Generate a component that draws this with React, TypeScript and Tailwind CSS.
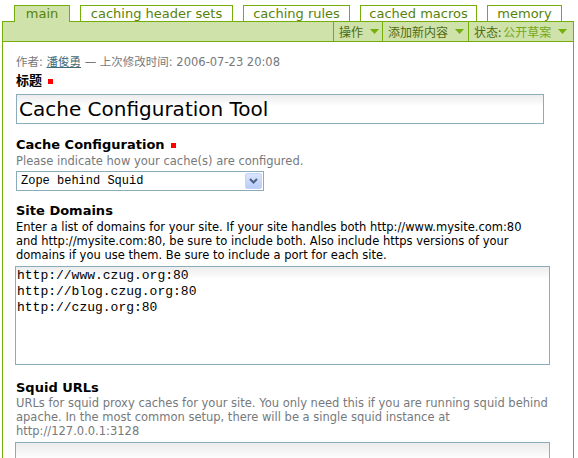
import React from "react";

const tabs = [
  { label: "main", w: "w-[56px]", active: true },
  { label: "caching header sets", w: "w-[153px]" },
  { label: "caching rules", w: "w-[107px]" },
  { label: "cached macros", w: "w-[117px]" },
  { label: "memory", w: "w-[75px]" },
];

function Arrow() {
  return (
    <svg width="9" height="5" viewBox="0 0 9 5" className="ml-[7px]">
      <path d="M0 0h9L4.5 5z" fill="#74ae0b" />
    </svg>
  );
}

function Required() {
  return <span className="inline-block w-[5px] h-[5px] bg-[#ff0000] ml-[6px] align-middle"></span>;
}

export default function App() {
  const sans = "font-['DejaVu_Sans','Noto_Sans_CJK_SC',sans-serif]";
  return (
    <div className={`w-[578px] h-[458px] bg-white overflow-hidden ${sans}`}>
      <div className="flex gap-[10px] pl-[14px] pt-[5px] h-[21px]">
        {tabs.map((t) =>
          t.active ? (
            <div
              key={t.label}
              className={`${t.w} h-[17px] relative z-10 bg-[#cee2a9] border border-b-0 border-[#74ae0b] text-[13px] leading-[15px] text-[#578308] text-center`}
            >
              {t.label}
            </div>
          ) : (
            <div
              key={t.label}
              className={`${t.w} h-[16px] bg-white border border-b-0 border-[#74ae0b] text-[13px] leading-[15px] text-[#578308] text-center`}
            >
              {t.label}
            </div>
          )
        )}
      </div>
      <div className="ml-[2px] w-[572px] h-[21px] bg-[#cee2a9] border border-[#74ae0b] flex justify-end text-[12px] font-['Noto_Sans_CJK_SC',sans-serif]">
        <div className="w-[49px] border-l border-[#74ae0b] flex items-center pl-[5px] text-[#4e6a14]">
          操作
          <Arrow />
        </div>
        <div className="w-[86px] border-l border-[#74ae0b] flex items-center pl-[5px] text-[#4e6a14]">
          添加新内容
          <Arrow />
        </div>
        <div className="w-[105px] border-l border-[#74ae0b] flex items-center pl-[5px] text-[#4e6a14]">
          状态:
          <span className="ml-[2px] text-[#74a81c]">公开草案</span>
          <Arrow />
        </div>
      </div>
      <div className="ml-[2px] w-[572px] h-[420px] border-l border-r border-[#74ae0b] pl-[13px] pt-[13px]">
        <div className="text-[11.5px] leading-[14px] text-[#76797c]">
          作者: <span className="text-[#436976] underline">潘俊勇</span> — 上次修改时间: 2006-07-23 20:08
        </div>
        <div className="mt-[4px] text-[13px] leading-[16px] font-bold text-black">
          标题
          <Required />
        </div>
        <div className="mt-[5px] w-[528px] h-[30px] border border-[#8cacbb] bg-gradient-to-b from-[#ececec] to-white to-40% text-[20px] leading-[28px] pl-[2px] text-black">
          Cache Configuration Tool
        </div>
        <div className="mt-[13px] text-[13px] leading-[16px] font-bold text-black">
          Cache Configuration
          <Required />
        </div>
        <div className="mt-[1px] text-[11.5px] leading-[14px] text-[#76797c]">
          Please indicate how your cache(s) are configured.
        </div>
        <div className="mt-[3px] w-[248px] h-[20px] border border-[#8cacbb] flex items-center justify-between pl-[4px] pr-[1px]">
          <span className="font-['Liberation_Mono',monospace] text-[12px] text-black">Zope behind Squid</span>
          <span className="w-[17px] h-[16px] rounded-[2px] bg-gradient-to-b from-[#dbe6fd] to-[#b7ccf8] border border-[#c3d3fd] flex items-center justify-center">
            <svg width="9" height="6" viewBox="0 0 9 6">
              <path d="M1 1l3.5 3.5L8 1" stroke="#4d6185" strokeWidth="2" fill="none" />
            </svg>
          </span>
        </div>
        <div className="mt-[12px] text-[13px] leading-[16px] font-bold text-black">Site Domains</div>
        <div className="mt-[1px] text-[11.5px] leading-[14px] text-black whitespace-nowrap">
          <div>Enter a list of domains for your site. If your site handles both http://www.mysite.com:80</div>
          <div>and http://mysite.com:80, be sure to include both. Also include https versions of your</div>
          <div>domains if you use them. Be sure to include a port for each site.</div>
        </div>
        <div className="mt-[4px] -ml-[1px] w-[535px] h-[99px] border border-[#8cacbb] bg-gradient-to-b from-[#ececec] to-white to-[12%] pt-[1px] pl-[1px] font-['Liberation_Mono',monospace] text-[13px] leading-[16px] text-black">
          <div>http://www.czug.org:80</div>
          <div>http://blog.czug.org:80</div>
          <div>http://czug.org:80</div>
        </div>
        <div className="mt-[15px] text-[13px] leading-[16px] font-bold text-black">Squid URLs</div>
        <div className="mt-[0px] text-[11.5px] leading-[14px] text-[#76797c] whitespace-nowrap">
          <div>URLs for squid proxy caches for your site. You only need this if you are running squid behind</div>
          <div>apache. In the most common setup, there will be a single squid instance at</div>
          <div>http://127.0.0.1:3128</div>
        </div>
        <div className="mt-[4px] -ml-[1px] w-[535px] h-[60px] border border-[#8cacbb] bg-gradient-to-b from-[#ececec] to-white to-[30%]"></div>
      </div>
    </div>
  );
}
